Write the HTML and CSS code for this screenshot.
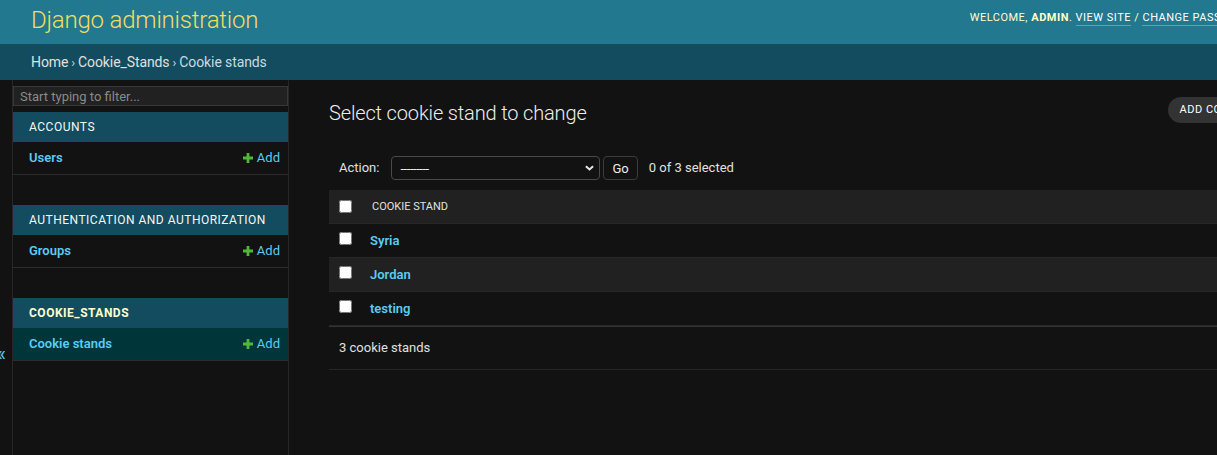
FILE: index.html
```html
<!DOCTYPE html>
<html lang="en">
<head>
<meta charset="utf-8">
<title>Select cookie stand to change | Django site admin</title>
<link rel="stylesheet" href="styles.css">
</head>
<body>
<div class="page">
  <header class="header">
    <h1 class="branding">Django administration</h1>
    <div class="user-tools">
      WELCOME, <strong>ADMIN</strong>. <a href="#">VIEW SITE</a> / <a href="#">CHANGE PASSWORD</a> / <a href="#">LOG OUT</a>
    </div>
  </header>
  <nav class="breadcrumbs">
    <a href="#">Home</a><span class="sep">›</span><a href="#">Cookie_Stands</a><span class="sep">›</span><span>Cookie stands</span>
  </nav>
  <div class="main">
    <div class="toggle"><span class="toggle-glyph">«</span></div>
    <aside class="sidebar">
      <input class="nav-filter" type="search" placeholder="Start typing to filter...">
      <div class="module">
        <div class="caption">Accounts</div>
        <div class="model-row">
          <a class="model-link" href="#">Users</a>
          <a class="addlink" href="#"><svg class="plus" viewBox="0 0 10 10"><path d="M3.6 0h2.8v3.6H10v2.8H6.4V10H3.6V6.4H0V3.6h3.6z"/></svg>Add</a>
        </div>
      </div>
      <div class="module">
        <div class="caption">Authentication and Authorization</div>
        <div class="model-row">
          <a class="model-link" href="#">Groups</a>
          <a class="addlink" href="#"><svg class="plus" viewBox="0 0 10 10"><path d="M3.6 0h2.8v3.6H10v2.8H6.4V10H3.6V6.4H0V3.6h3.6z"/></svg>Add</a>
        </div>
      </div>
      <div class="module">
        <div class="caption current-app">Cookie_Stands</div>
        <div class="model-row current-model">
          <a class="model-link" href="#">Cookie stands</a>
          <a class="addlink" href="#"><svg class="plus" viewBox="0 0 10 10"><path d="M3.6 0h2.8v3.6H10v2.8H6.4V10H3.6V6.4H0V3.6h3.6z"/></svg>Add</a>
        </div>
      </div>
    </aside>
    <main class="content">
      <div class="content-head">
        <h1 class="title">Select cookie stand to change</h1>
        <a class="object-tool" href="#">ADD COOKIE STAND</a>
      </div>
      <div class="actions">
        <span class="action-label">Action:</span>
        <span class="select-wrap">
          <select class="action-select">
            <option>---------</option>
            <option>Delete selected cookie stands</option>
          </select>
          <svg class="chevron" viewBox="0 0 10 6"><path d="M1 1l4 3.6L9 1" fill="none" stroke="#e6e6e6" stroke-width="2.2"/></svg>
        </span>
        <button class="go">Go</button>
        <span class="counter">0 of 3 selected</span>
      </div>
      <table class="results">
        <thead>
          <tr>
            <th class="check-col"><input type="checkbox"></th>
            <th class="col-head">Cookie stand</th>
          </tr>
        </thead>
        <tbody>
          <tr class="row1">
            <td class="check-col"><input type="checkbox"></td>
            <th class="field"><a href="#">Syria</a></th>
          </tr>
          <tr class="row2">
            <td class="check-col"><input type="checkbox"></td>
            <th class="field"><a href="#">Jordan</a></th>
          </tr>
          <tr class="row1">
            <td class="check-col"><input type="checkbox"></td>
            <th class="field"><a href="#">testing</a></th>
          </tr>
        </tbody>
      </table>
      <p class="paginator">3 cookie stands</p>
    </main>
  </div>
</div>
</body>
</html>
```

FILE: styles.css
```css
html, body {
  margin: 0;
  padding: 0;
  overflow: hidden;
  background: #121212;
}
body {
  font-family: Roboto, "Liberation Sans", sans-serif;
  color: #eeeeee;
  font-size: 13px;
}
a {
  text-decoration: none;
}
.page {
  width: 1354px;
}

/* header */
.header {
  display: flex;
  justify-content: space-between;
  align-items: flex-start;
  height: 44px;
  box-sizing: border-box;
  padding: 6px 40px 0 31px;
  background: #22788f;
}
.branding {
  margin: 0;
  font-size: 24px;
  line-height: 28px;
  font-weight: 300;
  letter-spacing: -0.2px;
  color: #f5dd5d;
}
.user-tools {
  margin-top: 5px;
  font-size: 11px;
  line-height: 14px;
  letter-spacing: 0.5px;
  color: #ffffcc;
  white-space: nowrap;
}
.user-tools strong {
  font-weight: 700;
}
.user-tools a {
  color: #ffffff;
  border-bottom: 1px solid rgba(255, 255, 255, 0.3);
  padding-bottom: 1px;
}

/* breadcrumbs */
.breadcrumbs {
  display: flex;
  align-items: center;
  height: 36px;
  padding: 0 31px;
  background: #124c5e;
  color: #c4dce8;
  font-size: 14px;
  letter-spacing: -0.1px;
}
.breadcrumbs a {
  color: #e0e0e0;
}
.breadcrumbs .sep {
  margin: 0 3px;
  font-size: 13px;
}

/* main layout */
.main {
  display: flex;
  min-height: calc(100vh - 80px);
}
.toggle {
  flex: 0 0 12px;
  display: flex;
  justify-content: flex-end;
  align-items: flex-start;
  overflow: hidden;
  border-right: 1px solid #272727;
  padding-top: 264px;
  box-sizing: content-box;
}
.toggle-glyph {
  flex: none;
  font-size: 20px;
  line-height: 20px;
  color: #5ccbf2;
  margin-right: 6px;
}
.sidebar {
  flex: 0 0 275px;
  border-right: 1px solid #272727;
  border-top: 1px solid transparent;
}
.nav-filter {
  display: block;
  width: 100%;
  box-sizing: border-box;
  margin: 5px 0 6px;
  padding: 2px 6px;
  height: 20px;
  border: 1px solid #383838;
  border-radius: 0;
  background: #212121;
  color: #eeeeee;
  font-family: inherit;
  font-size: 13px;
  line-height: 14px;
  outline: none;
}
.nav-filter::placeholder {
  color: #8a8a8a;
}
.module {
  margin-bottom: 30px;
}
.caption {
  background: #124c5e;
  color: #f7f7f7;
  padding: 8px 16px;
  font-size: 12px;
  line-height: 14px;
  letter-spacing: 0.5px;
  text-transform: uppercase;
}
.caption.current-app {
  color: #ffffcc;
  font-weight: 700;
}
.model-row {
  display: flex;
  justify-content: space-between;
  align-items: center;
  padding: 8px 8px 8px 16px;
  line-height: 16px;
  border-bottom: 1px solid #2c2c2c;
}
.model-row.current-model {
  background: #00363a;
}
.model-link {
  color: #5ccbf2;
  font-weight: 600;
  font-size: 13px;
}
.addlink {
  display: flex;
  align-items: center;
  color: #5ccbf2;
  font-size: 13px;
}
.plus {
  width: 10px;
  height: 10px;
  margin-right: 4px;
  fill: #4fb83b;
}

/* content */
.content {
  flex: 1;
  padding: 20px 40px;
  min-width: 0;
}
.content-head {
  display: flex;
  justify-content: space-between;
  align-items: flex-start;
  margin-bottom: 20px;
}
.title {
  margin: 0;
  font-size: 20px;
  line-height: 26px;
  font-weight: 300;
  letter-spacing: -0.15px;
  color: #eeeeee;
}
.object-tool {
  margin-top: -3px;
  display: block;
  height: 26px;
  box-sizing: border-box;
  padding: 0 26px 0 12px;
  border-radius: 15px;
  background: #333333;
  color: #ffffff;
  font-size: 11px;
  line-height: 26px;
  letter-spacing: 0.5px;
  white-space: nowrap;
}
.actions {
  display: flex;
  align-items: center;
  padding: 9px 10px 11px;
  height: 24px;
  color: #e0e0e0;
  font-size: 13px;
}
.action-label {
  margin-right: 12px;
}
.select-wrap {
  position: relative;
  display: block;
  margin-top: 2px;
}
.action-select {
  display: block;
  appearance: none;
  -webkit-appearance: none;
  width: 209px;
  height: 24px;
  box-sizing: border-box;
  padding: 0 20px 0 8px;
  border: 1px solid #4a4a4a;
  border-radius: 4px;
  background: #121212;
  color: #eeeeee;
  font-family: inherit;
  font-size: 13px;
  letter-spacing: -0.45px;
  outline: none;
}
.chevron {
  position: absolute;
  right: 6px;
  top: 9px;
  width: 9px;
  height: 6px;
}
.go {
  margin-left: 3px;
  margin-top: 2px;
  height: 24px;
  padding: 0 8px;
  border: 1px solid #3c3c3c;
  border-radius: 4px;
  background: #121212;
  color: #eeeeee;
  font-family: inherit;
  font-size: 13px;
}
.counter {
  margin-left: 11px;
}
.results {
  width: 100%;
  border-collapse: collapse;
}
.results thead th {
  background: #212121;
  height: 33px;
  box-sizing: border-box;
  padding: 0;
  border-bottom: 1px solid #272727;
  text-align: left;
  font-weight: 400;
}
.check-col {
  width: 31px;
  padding: 0 0 0 10px !important;
  box-sizing: border-box;
}
.check-col input {
  display: block;
  margin: 0;
  width: 13px;
  height: 13px;
}
.col-head {
  padding-left: 12px !important;
  font-size: 11px;
  color: #e0e0e0;
  text-transform: uppercase;
}
.results td, .results tbody th {
  padding: 8px 10px;
  line-height: 17px;
  border-bottom: 1px solid #272727;
  text-align: left;
  vertical-align: middle;
}
.results tbody .check-col input {
  margin-top: -3px;
}
.row2 {
  background: #212121;
}
.field a {
  color: #5ccbf2;
  font-weight: 600;
  font-size: 13px;
}
.paginator {
  margin: 0;
  padding: 10px;
  line-height: 22px;
  font-size: 13px;
  color: #e0e0e0;
  border-top: 1px solid #353535;
  border-bottom: 1px solid #272727;
}
```
